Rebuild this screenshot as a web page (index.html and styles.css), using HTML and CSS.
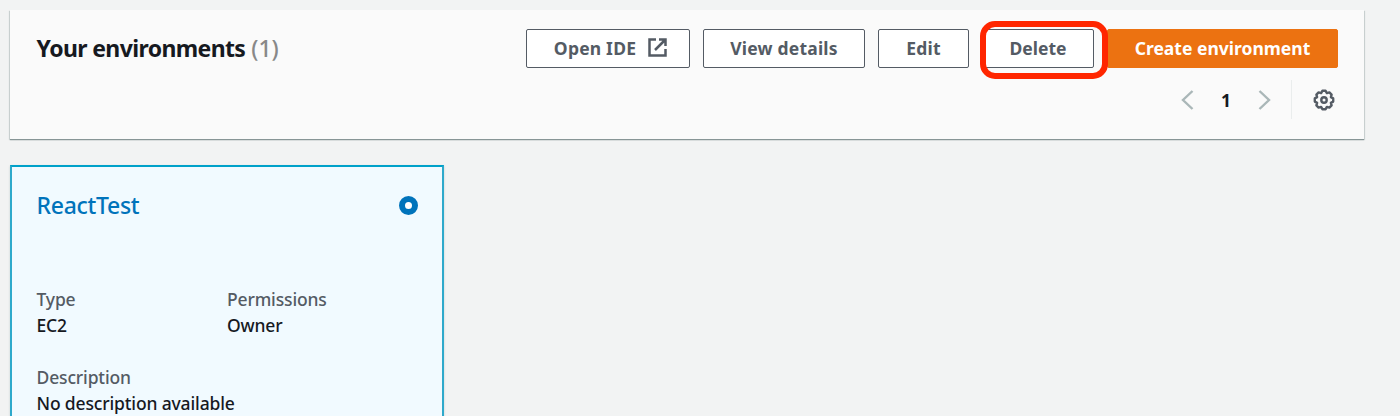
FILE: index.html
```html
<!DOCTYPE html>
<html lang="en">
  <head>
    <meta charset="UTF-8">
    <title>Your environments</title>
    <link rel="stylesheet" href="styles.css">
  </head>
  <body>
    <div class="panel">
      <div class="panel-top">
        <h1><span class="title">Your environments</span> <span class="count">(1)</span></h1>
        <div class="actions">
          <button class="btn open"><span>Open IDE</span>
            <svg class="external" width="19" height="19" viewBox="0 0 19 19">
              <path d="M8 1.5H1.5v16h16V11M11 1.5h6.5V8M17.5 1.5L7 12"/>
            </svg>
          </button>
          <button class="btn view">View details</button>
          <button class="btn edit">Edit</button>
          <div class="marked">
            <button class="btn delete">Delete</button>
            <div class="ring"></div>
          </div>
          <button class="btn create">Create environment</button>
        </div>
      </div>
      <div class="tools">
        <svg class="arrow" width="13" height="20" viewBox="0 0 13 20"><path d="M11.5 1L2 10l9.5 9"/></svg>
        <span class="page">1</span>
        <svg class="arrow" width="13" height="20" viewBox="0 0 13 20"><path d="M1.5 1L11 10l-9.5 9"/></svg>
        <div class="settings">
          <svg class="gear" width="22" height="22" viewBox="0 0 22 22">
            <path d="M9.4 1.8H12.6L13.9 4.1L16.4 3.4L18.6 5.6L17.9 8.1L20.2 9.4V12.6L17.9 13.9L18.6 16.4L16.4 18.6L13.9 17.9L12.6 20.2H9.4L8.1 17.9L5.6 18.6L3.4 16.4L4.1 13.9L1.8 12.6V9.4L4.1 8.1L3.4 5.6L5.6 3.4L8.1 4.1z"/>
            <circle cx="11" cy="11" r="2.7"/>
          </svg>
        </div>
      </div>
    </div>

    <div class="card">
      <div class="card-top">
        <a class="name">ReactTest</a>
        <span class="radio"></span>
      </div>
      <dl class="fields">
        <div class="field">
          <dt>Type</dt>
          <dd>EC2</dd>
        </div>
        <div class="field">
          <dt>Permissions</dt>
          <dd>Owner</dd>
        </div>
        <div class="field">
          <dt>Description</dt>
          <dd class="wide">No description available</dd>
        </div>
      </dl>
    </div>
  </body>
</html>
```
FILE: styles.css
```css
html { background-color: #f2f3f3; }
body { margin: 0; padding: 10px 36px 0 10px; height: 416px; box-sizing: border-box; overflow: hidden;
       font-family: "Noto Sans", sans-serif; font-size: 17.5px; color: #16191f; }

.panel { height: 129px; box-sizing: border-box; padding: 19px 26px 0 26.5px; background-color: #fafafa;
         box-shadow: 0 1px 1px 0 #879596, 1px 1px 1px 0 #d5dbdb, -1px 1px 1px 0 #d5dbdb; }
.panel-top { display: flex; justify-content: space-between; }

h1 { margin: 0; font-size: 23px; line-height: 39px; font-weight: bold; white-space: nowrap; }
.title { letter-spacing: -.62px; }
.count { color: #888; font-weight: 500; }

.actions { display: flex; gap: 13px; }
.btn { display: flex; align-items: center; justify-content: center; box-sizing: border-box;
       height: 39px; padding: 0 0 2px; border: 1.3px solid #545b64; border-radius: 2px; background-color: #fff;
       color: #545b64; font: bold 17.5px "Noto Sans", sans-serif; white-space: nowrap; }
.open { width: 164px; gap: 12px; padding-left: 5px; letter-spacing: .2px; }
.view { width: 162px; letter-spacing: .2px; }
.edit { width: 91px; letter-spacing: .2px; }
.delete { width: 112px; }
.create { width: 231px; border-color: #ec7211; background-color: #ec7211; color: #fff; }
.external { fill: none; stroke: #545b64; stroke-width: 2.5; }

.marked { position: relative; }
.ring { position: absolute; left: -2px; top: -8px; width: 128px; height: 58px; box-sizing: border-box;
        border: 6px solid #ff2600; border-radius: 15px; }

.tools { display: flex; align-items: center; justify-content: flex-end; height: 39px; margin-top: 12px; }
.arrow { fill: none; stroke: #aab7b8; stroke-width: 2.4; }
.page { width: 64px; text-align: center; font-weight: bold; }
.settings { display: flex; align-items: center; justify-content: flex-end; width: 47px; height: 39px;
            margin-left: 20px; border-left: 1px solid #eaeded; box-sizing: border-box; }
.gear { fill: none; stroke: #545b64; stroke-width: 2.4; stroke-linejoin: round; margin-right: 2.6px; }

.card { width: 434px; height: 251px; margin-top: 26px; box-sizing: border-box; padding: 25px 24px 0 24.5px;
        border: 2px solid #2ea9cb; border-top-color: #00a1c9; border-bottom: 0; background-color: #f1faff;
        box-shadow: 0 1px 2px #c8d0d0; }
.card-top { display: flex; align-items: center; justify-content: space-between; height: 26px; }
.name { margin-top: -1px; font-size: 23px; font-weight: 500; letter-spacing: -.3px; color: #0073bb; }
.radio { width: 19px; height: 19px; box-sizing: border-box; border: 6px solid #0073bb;
         border-radius: 50%; background-color: #fff; }

.fields { display: grid; grid-template-columns: 190.5px 1fr; row-gap: 26px; margin: 68px 0 0; }
.field { line-height: 26px; font-weight: 500; letter-spacing: -.15px; white-space: nowrap; }
dt { color: #545b64; }
dd { margin: 0; }
.wide { height: 20px; }
```
